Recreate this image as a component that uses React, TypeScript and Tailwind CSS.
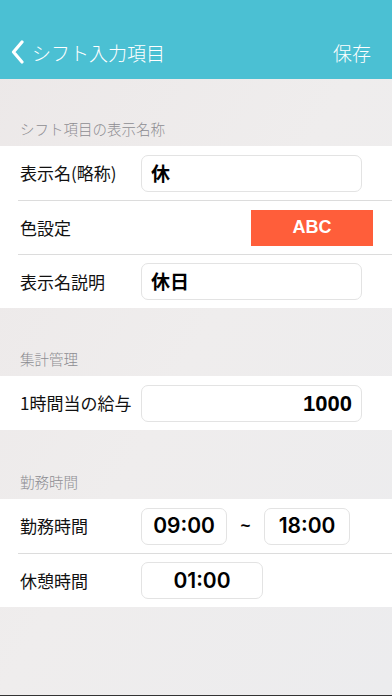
import React from 'react';

const jp = { fontFamily: '"Noto Sans CJK JP", "Noto Sans", sans-serif' };
const num = { fontFamily: '"Liberation Sans", "Noto Sans CJK JP", sans-serif' };
const time = { fontFamily: 'Inter, "Liberation Sans", sans-serif' };

function SectionHeader({ title, height }: { title: string; height: string }) {
  return (
    <div className={`${height} flex items-end px-[20px] pb-[8px]`}>
      <span className="text-[14.5px] font-light text-[#8d8d92] leading-none pb-[2px]" style={jp}>
        {title}
      </span>
    </div>
  );
}

function Row({ label, first, children }: { label: string; first?: boolean; children: React.ReactNode }) {
  return (
    <div className="pl-[18px]">
      <div className={`h-[54px] flex items-center ${first ? '' : 'border-t border-[#dcdcdc]'}`}>
        <span className="w-[123px] pl-[2px] text-[17px] text-[#111]" style={jp}>
          {label}
        </span>
        <div className="flex-1 flex items-center">{children}</div>
      </div>
    </div>
  );
}

function Field({ children, className }: { children: React.ReactNode; className: string }) {
  return (
    <div className={`h-[37px] flex items-center bg-white border border-[#e3e3e3] rounded-[7px] ${className}`}>
      {children}
    </div>
  );
}

export default function App() {
  return (
    <div className="w-[392px] h-[696px] flex flex-col bg-gradient-to-br from-[#ece8e8] via-[#efeded] to-[#ececee] overflow-hidden">
      {/* nav bar */}
      <div className="h-[79px] bg-[#4bc0d3] pt-[25px] shrink-0">
        <div className="h-[54px] flex items-center justify-between pl-[11px] pr-[21px]">
          <div className="flex items-center">
            <svg width="14" height="24" viewBox="0 0 14 24" className="mr-[7px]">
              <path d="M11 2 L2.5 12 L11 22" fill="none" stroke="white" strokeWidth="3.2" strokeLinecap="round" strokeLinejoin="round" />
            </svg>
            <span className="text-[19px] font-light text-white leading-none" style={jp}>シフト入力項目</span>
          </div>
          <span className="text-[19px] font-light text-white leading-none" style={jp}>保存</span>
        </div>
      </div>

      <SectionHeader title="シフト項目の表示名称" height="h-[67px]" />
      <div className="bg-white">
        <Row label="表示名(略称)" first>
          <Field className="w-[221px] px-[9px]">
            <span className="text-[19px] font-bold text-black" style={jp}>休</span>
          </Field>
        </Row>
        <Row label="色設定">
          <div className="ml-[110px] w-[122px] h-[36px] bg-[#ff5e3a] flex items-center justify-center">
            <span className="text-[18px] font-bold text-white" style={num}>ABC</span>
          </div>
        </Row>
        <Row label="表示名説明">
          <Field className="w-[221px] px-[9px]">
            <span className="text-[19px] font-bold text-black" style={jp}>休日</span>
          </Field>
        </Row>
      </div>

      <SectionHeader title="集計管理" height="h-[68px]" />
      <div className="bg-white">
        <Row label="1時間当の給与" first>
          <Field className="w-[221px] px-[9px] justify-end">
            <span className="text-[22px] font-bold text-black" style={num}>1000</span>
          </Field>
        </Row>
      </div>

      <SectionHeader title="勤務時間" height="h-[69px]" />
      <div className="bg-white">
        <Row label="勤務時間" first>
          <Field className="w-[86px] justify-center">
            <span className="text-[21px] font-semibold text-black" style={time}>09:00</span>
          </Field>
          <span className="w-[37px] text-center text-[17px] font-bold text-black" style={num}>~</span>
          <Field className="w-[86px] justify-center">
            <span className="text-[21px] font-semibold text-black" style={time}>18:00</span>
          </Field>
        </Row>
        <Row label="休憩時間">
          <Field className="w-[122px] justify-center">
            <span className="text-[21px] font-semibold text-black" style={time}>01:00</span>
          </Field>
        </Row>
      </div>

      <div className="flex-1" />
      <div className="h-[1px] bg-[#333] shrink-0" />
    </div>
  );
}
